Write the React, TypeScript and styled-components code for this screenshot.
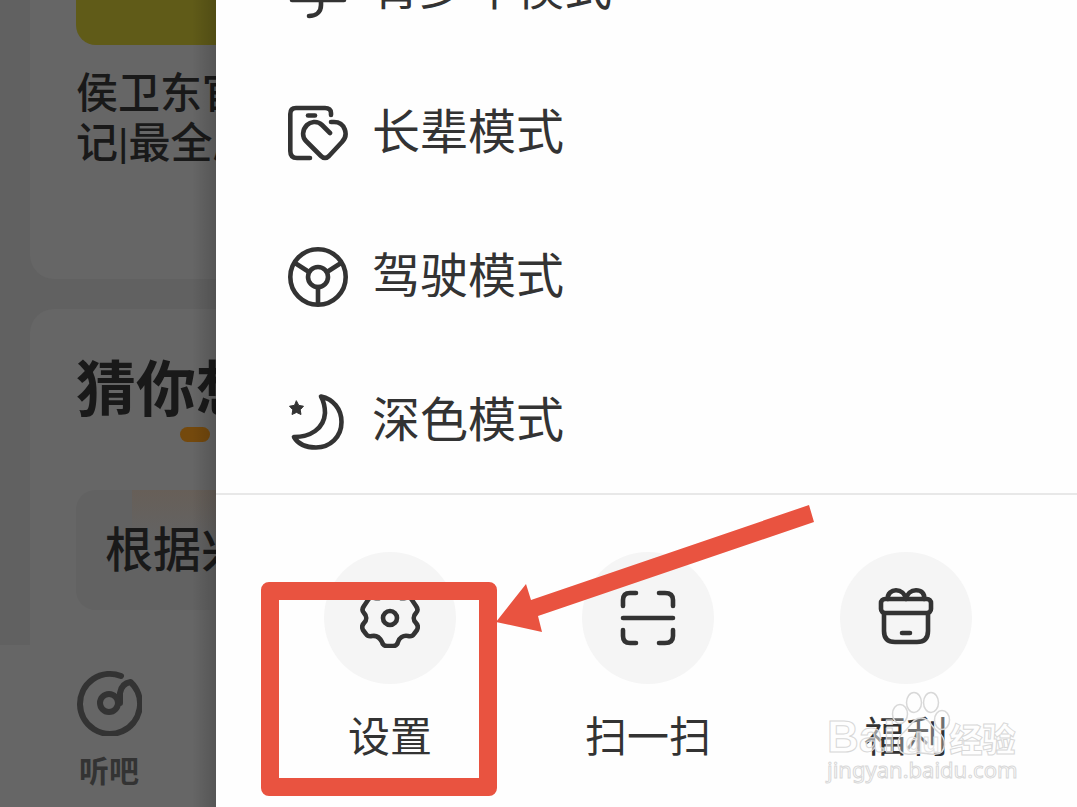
import React from "react";
import styled, { createGlobalStyle } from "styled-components";

const ink = "#333333";

const GlobalStyle = createGlobalStyle`
  *, *::before, *::after { box-sizing: border-box; }
  html, body, #root { height: 100%; }
  body {
    margin: 0;
    overflow: hidden;
    background: #606060;
    font-family: "Noto Sans CJK SC", "Noto Sans", sans-serif;
    color: ${ink};
  }
  button { font: inherit; color: inherit; border: 0; padding: 0; background: none; cursor: pointer; }
`;

const Screen = styled.div`
  display: grid;
  grid-template-columns: 216px minmax(0, 1fr);
  min-height: 100vh;
  height: 100%;
  overflow: hidden;
`;

const Backdrop = styled.aside`
  position: relative;
  display: flex;
  flex-direction: column;
  min-width: 0;
  overflow: hidden;
  white-space: nowrap;
  background: #616161;
  color: #191919;

  &::after {
    content: "";
    position: absolute;
    inset: 0 0 0 auto;
    width: 24px;
    background: linear-gradient(to right, transparent, rgba(0, 0, 0, 0.16));
  }
`;

const Card = styled.section<{ $flush?: "top" | "bottom" }>`
  margin-left: 30px;
  padding-left: 46px;
  background: #666666;
  border-radius: ${(p) => (p.$flush === "top" ? "0 0 0 24px" : "24px 0 0 0")};
`;

const BookCard = styled(Card)`
  height: 279px;
  margin-bottom: 30px;
`;

const GuessCard = styled(Card)`
  flex: 1;
  padding-top: 34px;
`;

const Cover = styled.div`
  height: 45px;
  margin-bottom: 24px;
  background: #605b18;
  border-radius: 0 0 0 20px;
`;

const BookTitle = styled.p`
  margin: 0;
  font-family: Roboto, "Noto Sans CJK SC", sans-serif;
  font-size: 42px;
  font-weight: 500;
  line-height: 50px;
`;

const Heading = styled.h2`
  margin: 0;
  font-size: 60px;
  font-weight: 700;
  line-height: 84px;
`;

const Accent = styled.div`
  width: 30px;
  height: 15px;
  margin-left: 104px;
  border-radius: 8px;
  background: #74490d;
`;

const Interest = styled.button`
  display: block;
  width: 100%;
  height: 120px;
  margin-top: 48px;
  padding: 0 0 8px 29px;
  border-radius: 20px 0 0 20px;
  background: linear-gradient(#675f58, #636363) 56px 0 / 100% 48px no-repeat, #626262;
  font-size: 48px;
  font-weight: 500;
  text-align: left;
`;

const TabBar = styled.nav`
  display: flex;
  height: 162px;
  padding-left: 73px;
  background: #666666;
`;

const Tab = styled.button`
  display: flex;
  flex-direction: column;
  align-items: center;
  width: 72px;
  padding-top: 25px;
  color: #333333;
  font-size: 30px;
  font-weight: 700;
  line-height: 42px;

  svg { margin-bottom: 12px; }
`;

const Drawer = styled.main`
  display: flex;
  flex-direction: column;
  min-width: 0;
  overflow: hidden;
  background: #fefefe;
`;

const Modes = styled.nav`
  display: flex;
  flex-direction: column;
  flex-shrink: 0;
  margin-top: -83px;
  border-bottom: 2px solid #e8e8e8;
`;

const ModeRow = styled.button`
  display: flex;
  align-items: center;
  gap: 24px;
  height: 144px;
  padding-left: 72px;
  font-size: 48px;
  line-height: 64px;
  text-align: left;
`;

const ModeLabel = styled.span`
  padding-bottom: 10px;
`;

const Actions = styled.section`
  position: relative;
  display: grid;
  grid-template-columns: repeat(3, 1fr);
  flex: 1;
  padding: 57px 42px 0 45px;
`;

const Action = styled.button`
  position: relative;
  display: flex;
  flex-direction: column;
  align-items: center;
  align-self: start;
  gap: 20px;
  font-size: 42px;
  line-height: 60px;
`;

const Disc = styled.span`
  display: grid;
  place-items: center;
  width: 132px;
  height: 132px;
  border-radius: 50%;
  background: #f5f5f5;
`;

const Highlight = styled.span`
  position: absolute;
  top: 30px;
  left: 0;
  width: 236px;
  height: 214px;
  border: 18px solid #e95340;
  border-radius: 8px;
`;

const Pointer = styled.svg`
  position: absolute;
  top: 10px;
  left: 280px;
`;

const Watermark = styled.div`
  position: absolute;
  right: 56px;
  bottom: 24px;
  width: 194px;
  color: rgba(255, 255, 255, 0.5);
  -webkit-text-stroke: 1px #d8d8d8;
  pointer-events: none;
`;

const Brand = styled.div`
  display: flex;
  align-items: baseline;
  height: 36px;
  font-family: "Liberation Sans", sans-serif;
  font-size: 44px;
  font-weight: 700;
  line-height: 36px;
`;

const BrandInner = styled.span`
  width: 54px;
  font-size: 28px;
  text-align: center;
`;

const BrandSuffix = styled.span`
  font-family: "Noto Sans CJK SC", sans-serif;
  font-size: 33px;
  font-weight: 900;
`;

const Site = styled.div`
  font-family: "Noto Sans", sans-serif;
  font-size: 22px;
  line-height: 28px;
`;

const Paw = styled.svg`
  position: absolute;
  left: 64px;
  top: -28px;
`;

type IconProps = { size?: number; children: React.ReactNode };

const Icon = ({ size = 60, children }: IconProps) => (
  <svg
    width={size}
    height={size}
    viewBox={`0 0 ${size} ${size}`}
    fill="none"
    stroke="currentColor"
    strokeWidth="4.6"
    strokeLinecap="round"
    strokeLinejoin="round"
    aria-hidden="true"
  >
    {children}
  </svg>
);

const YouthIcon = () => (
  <Icon>
    <path d="M5 30C5 15 16 7 29 7s24 8 24 23M4 41h52M33 42v4c0 7-5 11-12 11" />
  </Icon>
);

const ElderIcon = () => (
  <Icon>
    <path d="M43 12V10Q43 5 37 5H8Q2.300 5 2.300 11V48Q2.300 55 9 55H22" />
    <path d="M20 12.500H27" />
    <path d="M42 30L34 22C29 17 22 19 19 22C14 27 14 34 18 38L33 53Q37 57 41 53L54 39C61 32 57 19 46 19H43" />
  </Icon>
);

const WheelIcon = () => (
  <Icon>
    <circle cx="30" cy="30" r="27.700" />
    <circle cx="30" cy="30" r="10" />
    <path d="M7 16L21 25M53 16L39 25M30 40V57" />
  </Icon>
);

const NightIcon = () => (
  <Icon>
    <path d="M33 5.500C45 8 53.500 18 53.500 31C53.500 46 42 56.500 28 56.500C18 56.500 10 53 6 46C22 46 36 38 37 22C37 15 36 11 33 5.500Z" />
    <path
      fill="currentColor"
      strokeWidth="1"
      d="M8.500 10L10.800 14.400L15.500 15.200L12.200 18.800L13 23.500L8.500 21.400L4 23.500L4.800 18.800L1.500 15.200L6.200 14.400Z"
    />
  </Icon>
);

const GearIcon = () => (
  <Icon>
    <path d="M24 5Q25 2 28 2H32Q35 2 36 5C37 9 41 11 45 10Q50 8 52 12L56 18Q59 22 56 25C53 28 53 32 56 35Q59 38 57 42L54 46Q52 49 48 48C43 47 39 50 38 54Q37 58 33 58H27Q23 58 22 54C20 50 17 47 12 48Q8 49 6 46L3 42Q1 38 4 35C7 32 7 28 4 25Q1 22 4 18L8 12Q10 8 15 10C19 11 23 9 24 5Z" />
    <circle cx="30" cy="30" r="7" />
  </Icon>
);

const ScanIcon = () => (
  <Icon>
    <path d="M5 18V12Q5 5 12 5H18M41 5H47Q55 5 55 12V18M5 42V48Q5 55 12 55H18M41 55H47Q55 55 55 48V42M5 30H55" />
  </Icon>
);

const GiftIcon = () => (
  <Icon>
    <rect x="5" y="11" width="50" height="14" rx="4" />
    <path d="M8 25V43Q8 54 19 54H41Q52 54 52 43V25M26 45H34M12 11C11 5 16 2.300 20 2.300C25 2.300 29 6 30 11C31 6 35 2.300 40 2.300C45 2.300 49 5 48 11" />
  </Icon>
);

const ListenIcon = () => (
  <svg width="66" height="66" viewBox="0 0 66 66" fill="none" stroke="currentColor" strokeWidth="6" strokeLinecap="round" strokeLinejoin="round" aria-hidden="true">
    <path d="M45 6A30 30 0 1 0 54.500 12C48 13 45 17 44 23V33" />
    <circle cx="33" cy="33" r="9" />
  </svg>
);

const modes = [
  { label: "青少年模式", icon: <YouthIcon /> },
  { label: "长辈模式", icon: <ElderIcon /> },
  { label: "驾驶模式", icon: <WheelIcon /> },
  { label: "深色模式", icon: <NightIcon /> },
];

const actions = [
  { label: "设置", icon: <GearIcon />, highlighted: true },
  { label: "扫一扫", icon: <ScanIcon /> },
  { label: "福利", icon: <GiftIcon /> },
];

export default function App() {
  return (
    <>
      <GlobalStyle />
      <Screen>
        <Backdrop>
          <BookCard $flush="top">
            <Cover />
            <BookTitle>
              侯卫东官
              <br />
              记|最全原
            </BookTitle>
          </BookCard>
          <GuessCard>
            <Heading>猜你想</Heading>
            <Accent />
            <Interest>根据兴</Interest>
          </GuessCard>
          <TabBar>
            <Tab>
              <ListenIcon />
              听吧
            </Tab>
          </TabBar>
        </Backdrop>
        <Drawer>
          <Modes>
            {modes.map((m) => (
              <ModeRow key={m.label}>
                {m.icon}
                <ModeLabel>{m.label}</ModeLabel>
              </ModeRow>
            ))}
          </Modes>
          <Actions>
            {actions.map((a) => (
              <Action key={a.label}>
                <Disc>{a.icon}</Disc>
                <span>{a.label}</span>
                {a.highlighted && <Highlight />}
              </Action>
            ))}
            <Pointer width="320" height="130" viewBox="0 0 320 130" aria-hidden="true">
              <path fill="#e95340" d="M313 0L318 17L42 111L46 127L0 117L30 79L35 95Z" />
            </Pointer>
            <Watermark>
              <Paw width="60" height="66" viewBox="0 0 60 66" fill="rgba(255,255,255,0.3)" stroke="#d8d8d8" strokeWidth="1.5" aria-hidden="true">
                <ellipse cx="9" cy="23" rx="7.500" ry="9.500" />
                <ellipse cx="23" cy="11.500" rx="7.500" ry="10" />
                <ellipse cx="40" cy="11.500" rx="7.500" ry="10" />
                <ellipse cx="51" cy="29" rx="7.500" ry="9.500" />
                <path d="M30 27C22 27 20 35 13 41C5 47 4 62 16 63C22 64 26 62 30 62C35 62 38 64 45 63C56 62 56 47 47 41C40 35 38 27 30 27Z" />
              </Paw>
              <Brand>
                <span>Bai</span>
                <BrandInner>du</BrandInner>
                <BrandSuffix>经验</BrandSuffix>
              </Brand>
              <Site>jingyan.baidu.com</Site>
            </Watermark>
          </Actions>
        </Drawer>
      </Screen>
    </>
  );
}
